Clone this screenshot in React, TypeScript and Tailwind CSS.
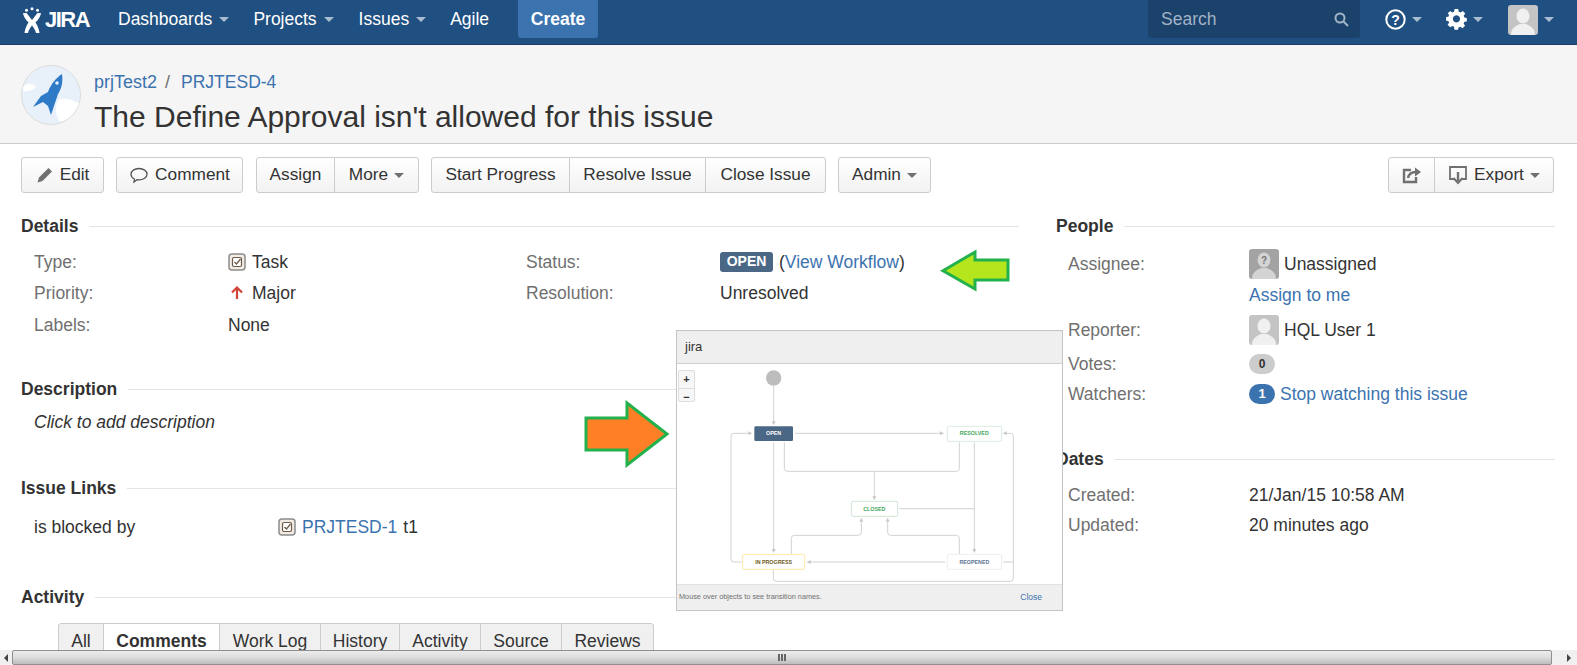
import React from 'react';

const Caret = ({ className = 'border-t-[#a9bcd0]' }: { className?: string }) => (
  <span className={`inline-block w-0 h-0 border-x-[5px] border-x-transparent border-t-[5px] ${className}`} />
);

const NavItem = ({ label, caret = true, className }: { label: string; caret?: boolean; className: string }) => (
  <a className={`flex items-center gap-[7px] mb-[5px] text-white text-[17.5px] ${className}`}>
    {label}
    {caret && <Caret />}
  </a>
);

const JiraLogo = () => (
  <div className="flex items-center w-[67px] h-[28px] mb-[5px] text-white">
    <svg width="18" height="26" viewBox="0 0 18 26" fill="currentColor" className="shrink-0">
      <circle cx="3.500" cy="3.200" r="1.500" />
      <circle cx="9" cy="1.800" r="1.500" />
      <circle cx="14.500" cy="3.200" r="1.500" />
      <path d="M0 6h3.500l5.500 7 5.500-7H18c-.5 4-3 7-5.500 9.500 2 3 3.500 6.500 4 10.500h-3.500c-.6-3-2.400-5.500-4-7.500-1.600 2-3.400 4.500-4 7.500H1.500c.5-4 2-7.500 4-10.500C3 13 .5 10 0 6z" />
    </svg>
    <span className="font-bold text-[22px] tracking-[-1.5px] ml-[4px] leading-none">JIRA</span>
  </div>
);

const Avatar = ({ size = 30, unknown = false }: { size?: number; unknown?: boolean }) => (
  <svg width={size} height={size} viewBox="0 0 30 30" className="shrink-0 rounded-[3px]">
    <rect width="30" height="30" fill={unknown ? '#a3a3a3' : '#c4c4c4'} />
    <ellipse cx="15" cy="11" rx="6.500" ry="7.500" fill={unknown ? '#d4d4d4' : '#f0f0f0'} />
    <path d="M3 30c0-7 5-9 9-11h6c4 2 9 4 9 11z" fill={unknown ? '#d4d4d4' : '#f0f0f0'} />
    {unknown && (
      <text x="15" y="15" textAnchor="middle" fontSize="10" fontWeight="700" fill="#777">?</text>
    )}
  </svg>
);

const ProjectAvatar = () => (
  <svg width="60" height="60" viewBox="0 0 60 60" className="shrink-0">
    <circle cx="30" cy="30" r="29.500" fill="#e8f0fa" stroke="#dcdcdc" />
    <path d="M38 34c5-1 12 0 20 4-3 9-10 17-19 19-4-5-6-16-1-23z" fill="#fff" />
    <path d="M2 22c4-4 10-4 13 0-2 3-8 5-13 4z" fill="#fff" />
    <path d="M41 9C42 16 41 23 37 29L34 38 30 50 27 41 22 37 12 42 20 31 27 27C30 19 35 13 41 9z" fill="#2f7ac6" />
    <circle cx="36" cy="18" r="1.800" fill="#e8f0fa" />
  </svg>
);

const TaskIcon = () => (
  <svg width="18" height="18" viewBox="0 0 18 18" className="shrink-0">
    <rect x="1" y="1" width="16" height="16" rx="3" fill="#f3ece4" stroke="#8c8c8c" strokeWidth="1.500" />
    <rect x="4.500" y="4.500" width="9" height="9" rx="1.500" fill="#fff" stroke="#6e5a48" strokeWidth="1.200" />
    <path d="M6.500 9l2 2 4-5" fill="none" stroke="#6e5a48" strokeWidth="1.300" />
  </svg>
);

const Btn = ({ children, className = '' }: { children: React.ReactNode; className?: string }) => (
  <button className={`h-[36px] flex items-center justify-center gap-[6px] border border-[#cccccc] bg-linear-to-b from-white to-[#f2f2f2] text-[#333] text-[17.25px] rounded-[3px] ${className}`}>
    {children}
  </button>
);

const GroupBtn = ({ children, className = '' }: { children: React.ReactNode; className?: string }) => (
  <button className={`h-full flex items-center justify-center gap-[6px] border-l border-[#cccccc] first:border-l-0 text-[#333] text-[17.25px] ${className}`}>
    {children}
  </button>
);

const BtnGroup = ({ children, className = '' }: { children: React.ReactNode; className?: string }) => (
  <div className={`h-[36px] flex border border-[#cccccc] bg-linear-to-b from-white to-[#f2f2f2] rounded-[3px] ${className}`}>
    {children}
  </div>
);

const Heading = ({ title, className = '' }: { title: string; className?: string }) => (
  <div className={`flex items-center gap-[11px] h-[24px] ${className}`}>
    <h4 className="font-bold text-[17.5px] text-[#333]">{title}</h4>
    <div className="flex-1 h-px bg-[#e4e4e4]" />
  </div>
);

const Field = ({ label, labelW, children, className = 'h-[32px]' }: { label: string; labelW: string; children?: React.ReactNode; className?: string }) => (
  <div className={`flex items-center text-[17.5px] ${className}`}>
    <span className={`text-[#707070] shrink-0 ${labelW}`}>{label}</span>
    <div className="flex items-center text-[#333]">{children}</div>
  </div>
);

const Link = ({ children, className = '' }: { children: React.ReactNode; className?: string }) => (
  <a className={`text-[#3b73af] ${className}`}>{children}</a>
);

const WorkflowDiagram = () => {
  const arrows = [
    'M311 182V292',
    'M375 325H818',
    'M343 352V430Q343 439 352 439H860Q868 439 868 430V352',
    'M613 439V516',
    'M311 352V675',
    'M913 352V675',
    'M688 551H913',
    'M364 688V640Q364 631 373 631H565Q574 631 574 622V590',
    'M868 688V640Q868 631 859 631H662Q653 631 653 622V590',
    'M825 711H420',
    'M217 711H192Q183 711 183 702V334Q183 325 192 325H235',
    'M310 735V760Q310 769 319 769H1021Q1030 769 1030 760V334Q1030 325 1021 325H1010',
    'M1000 711H1030',
  ];
  const heads = [
    '311,301 305,289 317,289',
    '822,325 810,319 810,331',
    '613,526 607,514 619,514',
    '311,684 305,672 317,672',
    '913,684 907,672 919,672',
    '574,578 568,590 580,590',
    '653,578 647,590 659,590',
    '410,711 422,705 422,717',
    '247,325 235,319 235,331',
    '998,325 1010,319 1010,331',
  ];
  return (
    <svg viewBox="21 117 1155 660" className="block w-[385px] h-[220px]">
      <circle cx="311" cy="159" r="23" fill="#bdbdbd" />
      {arrows.map((d) => (
        <path key={d} d={d} fill="none" stroke="#d2d2d2" strokeWidth="3" />
      ))}
      {heads.map((p) => (
        <polygon key={p} points={p} fill="#c8c8c8" />
      ))}
      <rect x="253" y="304" width="116" height="44" rx="4" fill="#4a6785" />
      <text x="311" y="331" textAnchor="middle" fontSize="16" fontWeight="700" fill="#fff">OPEN</text>
      <rect x="832" y="304" width="163" height="45" rx="5" fill="#fff" stroke="#dcebe0" strokeWidth="3" />
      <text x="913" y="331" textAnchor="middle" fontSize="16" fontWeight="700" fill="#3fa75a">RESOLVED</text>
      <rect x="544" y="529" width="139" height="45" rx="5" fill="#fff" stroke="#cfe6d5" strokeWidth="3" />
      <text x="613" y="557" textAnchor="middle" fontSize="16" fontWeight="700" fill="#3fa75a">CLOSED</text>
      <rect x="218" y="688" width="186" height="45" rx="5" fill="#fff" stroke="#ffe9a8" strokeWidth="3" />
      <text x="311" y="716" textAnchor="middle" fontSize="16" fontWeight="700" fill="#6b5a22">IN PROGRESS</text>
      <rect x="832" y="688" width="163" height="45" rx="5" fill="#fff" stroke="#ebeff3" strokeWidth="3" />
      <text x="913" y="716" textAnchor="middle" fontSize="16" fontWeight="700" fill="#5a7394">REOPENED</text>
    </svg>
  );
};

export default function App() {
  return (
    <div className="relative h-[665px] w-[1577px] overflow-hidden flex flex-col bg-white font-['Liberation_Sans',Arial,sans-serif]">
      {/* top nav */}
      <header className="h-[45px] shrink-0 bg-[#205081] border-b border-[#1b3f66] flex items-center">
        <div className="ml-[23px] mr-[28px]"><JiraLogo /></div>
        <NavItem label="Dashboards" className="mr-[24px]" />
        <NavItem label="Projects" className="mr-[25px]" />
        <NavItem label="Issues" className="mr-[24px]" />
        <NavItem label="Agile" caret={false} className="mr-[29px]" />
        <button className="self-start h-[38px] w-[80px] bg-[#3b73af] rounded-b-[3px] text-white font-bold text-[17.5px]">Create</button>
        <div className="ml-auto self-start h-[38px] w-[212px] bg-[#1b426b] rounded-b-[3px] flex items-center justify-between pl-[13px] pr-[11px]">
          <span className="text-[#a2b3c6] text-[17.5px]">Search</span>
          <svg width="15" height="15" viewBox="0 0 15 15" fill="none" stroke="#a2b3c6" strokeWidth="2">
            <circle cx="6" cy="6" r="4.500" />
            <path d="M9.500 9.500L14 14" />
          </svg>
        </div>
        <svg width="21" height="21" viewBox="0 0 21 21" className="ml-[25px] mb-[6px]">
          <circle cx="10.500" cy="10.500" r="9.200" fill="none" stroke="#fff" strokeWidth="2" />
          <text x="10.500" y="15.500" textAnchor="middle" fontSize="14" fontWeight="700" fill="#fff">?</text>
        </svg>
        <span className="ml-[6px] mb-[5px] flex"><Caret /></span>
        <svg width="21" height="21" viewBox="0 0 21 21" className="ml-[24px] mb-[6px]" fill="#fff">
          <path fillRule="evenodd" d="M8.500 0h4l.5 3 2 .9 2.500-1.800 2.800 2.800L18.500 7.400l.8 2 2.700.5v4l-2.700.4-.8 2 1.600 2.300-2.800 2.800-2.500-1.600-2 .8-.5 2.400h-4L7.800 19.600l-2-.8-2.300 1.600L.7 17.600l1.600-2.300-.8-2L-1 13V9l2.500-.5.800-2L.7 4.900l2.800-2.800L5.800 3.900l2-.9z M10.500 7a4 4 0 1 0 .01 0z" transform="translate(1 0) scale(.9)" />
        </svg>
        <span className="ml-[6px] mb-[5px] flex"><Caret /></span>
        <div className="ml-[25px] mb-[5px]"><Avatar /></div>
        <span className="ml-[6px] mr-[23px] mb-[5px] flex"><Caret /></span>
      </header>

      {/* issue header */}
      <section className="h-[99px] shrink-0 bg-[#f5f5f5] border-b border-[#cccccc] flex items-center pl-[21px] pt-[1px]">
        <ProjectAvatar />
        <div className="ml-[13px] mt-[16px]">
          <div className="flex items-center text-[18px] h-[24px] mt-[1px]">
            <Link>prjTest2</Link>
            <span className="text-[#707070] ml-[8px] mr-[11px]">/</span>
            <Link className="text-[17.5px]">PRJTESD-4</Link>
          </div>
          <h1 className="text-[30px] leading-[38px] text-[#333] mt-[3px]">The Define Approval isn't allowed for this issue</h1>
        </div>
      </section>

      {/* actions */}
      <div className="shrink-0 flex items-center pl-[21px] pr-[23px] mt-[13px]">
        <Btn className="w-[83px]">
          <svg width="18" height="18" viewBox="0 0 18 18" fill="#707070">
            <path d="M12.500 2l3.500 3.500L6.500 15 1.500 16.500 3 11.500z" />
          </svg>
          Edit
        </Btn>
        <Btn className="w-[127px] ml-[12px]">
          <svg width="20" height="20" viewBox="0 0 20 20" fill="none" stroke="#555" strokeWidth="1.300">
            <path d="M10 3.500c4.400 0 8 2.500 8 5.700s-3.600 5.700-8 5.700c-.7 0-1.300-.1-2-.2L5 17l.4-3C3.400 13 2 11.200 2 9.200c0-3.200 3.600-5.700 8-5.700z" />
          </svg>
          Comment
        </Btn>
        <BtnGroup className="ml-[13px]">
          <GroupBtn className="w-[77px]">Assign</GroupBtn>
          <GroupBtn className="w-[84px]">More <Caret className="border-t-[#707070]" /></GroupBtn>
        </BtnGroup>
        <BtnGroup className="ml-[12px]">
          <GroupBtn className="w-[137px]">Start Progress</GroupBtn>
          <GroupBtn className="w-[136px]">Resolve Issue</GroupBtn>
          <GroupBtn className="w-[120px]">Close Issue</GroupBtn>
        </BtnGroup>
        <Btn className="w-[93px] ml-[12px]">Admin <Caret className="border-t-[#707070]" /></Btn>
        <BtnGroup className="ml-auto">
          <GroupBtn className="w-[45px]">
            <svg width="20" height="18" viewBox="0 0 20 18" fill="none" stroke="#707070" strokeWidth="2.400">
              <path d="M9 4H2v12h12v-5" />
              <path d="M6 12c1-5 4-6 8-6" />
              <path d="M13 1.500l6 4.500-6 4.500z" fill="#707070" stroke="none" />
            </svg>
          </GroupBtn>
          <GroupBtn className="w-[119px]">
            <svg width="20" height="20" viewBox="0 0 20 20" fill="none" stroke="#707070" strokeWidth="1.800">
              <path d="M6 14H2V2h16v12h-4" />
              <path d="M10 7v9" strokeWidth="2.400" />
              <path d="M5.500 13l4.500 5 4.500-5" strokeWidth="2" />
            </svg>
            Export <Caret className="border-t-[#707070]" />
          </GroupBtn>
        </BtnGroup>
      </div>

      {/* body */}
      <main className="flex-1 min-h-0 overflow-hidden flex pl-[21px] pr-[22px] pt-[21px]">
        <div className="w-[998px] shrink-0">
          <Heading title="Details" className="mb-[8px]" />
          <div className="flex pl-[13px]">
            <div className="w-[492px]">
              <Field label="Type:" labelW="w-[194px]" className="h-[31.5px]">
                <TaskIcon /><span className="ml-[6px]">Task</span>
              </Field>
              <Field label="Priority:" labelW="w-[194px]" className="h-[31.5px]">
                <svg width="18" height="18" viewBox="0 0 18 18" fill="none" stroke="#d04437" strokeWidth="2.200">
                  <path d="M9 15V4M4 8.500L9 3.500l5 5" />
                </svg>
                <span className="ml-[6px]">Major</span>
              </Field>
              <Field label="Labels:" labelW="w-[194px]" className="h-[31.5px]">None</Field>
            </div>
            <div>
              <Field label="Status:" labelW="w-[194px]" className="h-[31.5px]">
                <span className="h-[20px] w-[53px] flex items-center justify-center rounded-[3px] bg-[#4a6785] text-white font-bold text-[14px]">OPEN</span>
                <span className="ml-[6px] text-[#333]">(<Link>View Workflow</Link>)</span>
              </Field>
              <Field label="Resolution:" labelW="w-[194px]" className="h-[31.5px]">Unresolved</Field>
            </div>
          </div>

          <Heading title="Description" className="mt-[36.5px]" />
          <div className="h-[32px] mt-[5px] pl-[13px] flex items-center italic text-[17.5px] text-[#333]">Click to add description</div>

          <Heading title="Issue Links" className="mt-[38px]" />
          <div className="flex items-center h-[32px] mt-[11px] pl-[13px] text-[17.5px] text-[#333]">
            <span className="w-[244px]">is blocked by</span>
            <TaskIcon />
            <Link className="ml-[6px]">PRJTESD-1</Link>
            <span className="ml-[6px]">t1</span>
          </div>

          <Heading title="Activity" className="mt-[42px]" />
          <div className="mt-[14px] ml-[37px] flex w-fit h-[40px] border border-[#cccccc] rounded-t-[3px] bg-[#f0f0f0] text-[17.5px] text-[#333]">
            <span className="w-[44px] pt-[4px] text-center">All</span>
            <span className="w-[117px] pt-[4px] text-center font-bold bg-white border-x border-[#cccccc]">Comments</span>
            <span className="w-[100px] pt-[4px] text-center">Work Log</span>
            <span className="w-[79px] pt-[4px] text-center border-l border-[#cccccc]">History</span>
            <span className="w-[81px] pt-[4px] text-center border-l border-[#cccccc]">Activity</span>
            <span className="w-[81px] pt-[4px] text-center border-l border-[#cccccc]">Source</span>
            <span className="w-[92px] pt-[4px] text-center border-l border-[#cccccc]">Reviews</span>
          </div>
        </div>

        <div className="ml-[37px] flex-1">
          <Heading title="People" />
          <div className="pl-[12px] mt-[10px]">
            <Field label="Assignee:" labelW="w-[181px]">
              <Avatar unknown /><span className="ml-[5px]">Unassigned</span>
            </Field>
            <div className="h-[31px] ml-[181px] flex items-center text-[17.5px]"><Link>Assign to me</Link></div>
            <div className="mt-[3px]">
              <Field label="Reporter:" labelW="w-[181px]">
                <Avatar /><span className="ml-[5px]">HQL User 1</span>
              </Field>
            </div>
            <Field label="Votes:" labelW="w-[181px]" className="h-[32px] mt-[2px]">
              <span className="w-[26px] h-[20px] rounded-full bg-[#cccccc] text-[#333] font-bold text-[12px] flex items-center justify-center">0</span>
            </Field>
            <Field label="Watchers:" labelW="w-[181px]" className="h-[32px] -mt-[2px]">
              <span className="w-[26px] h-[20px] rounded-full bg-[#3b73af] text-white font-bold text-[13px] flex items-center justify-center">1</span>
              <Link className="ml-[5px]">Stop watching this issue</Link>
            </Field>
          </div>
          <Heading title="Dates" className="mt-[37px]" />
          <div className="pl-[12px] mt-[8px]">
            <Field label="Created:" labelW="w-[181px]">21/Jan/15 10:58 AM</Field>
            <Field label="Updated:" labelW="w-[181px]" className="h-[32px] -mt-[2px]">20 minutes ago</Field>
          </div>
        </div>
      </main>

      {/* browser scrollbar */}
      <div className="h-[15px] shrink-0 flex bg-[#f0f0f0]">
        <div className="w-[12px] flex items-center justify-center shrink-0">
          <span className="w-0 h-0 border-y-[4px] border-y-transparent border-r-[4px] border-r-[#444]" />
        </div>
        <div className="flex-1 flex items-center justify-center gap-[1px] bg-linear-to-b from-[#ececec] via-[#dcdcdc] to-[#bdbdbd] border border-[#8f8f8f] rounded-[2px]">
          <span className="w-[2px] h-[7px] bg-[#666]" />
          <span className="w-[2px] h-[7px] bg-[#666]" />
          <span className="w-[2px] h-[7px] bg-[#666]" />
        </div>
        <div className="w-[25px] flex items-center justify-end pr-[6px] shrink-0">
          <span className="w-0 h-0 border-y-[4px] border-y-transparent border-l-[4px] border-l-[#444]" />
        </div>
      </div>

      {/* workflow popup */}
      <div className="absolute left-[676px] top-[330px] w-[387px] h-[281px] flex flex-col bg-white border border-[#c4c4c4]">
        <div className="h-[33px] shrink-0 bg-[#efefef] border-b border-[#cfcfcf] flex items-center pl-[8px] text-[13px] text-[#333]">jira</div>
        <div className="relative flex-1 min-h-0 overflow-hidden">
          <WorkflowDiagram />
          <div className="absolute left-[1px] top-[6px] w-[17px] h-[32px] flex flex-col border border-[#ddd] rounded-[2px] bg-[#f7f7f7] text-[11px] font-bold text-[#333]">
            <span className="flex-1 flex items-center justify-center border-b border-[#ddd]">+</span>
            <span className="flex-1 flex items-center justify-center">−</span>
          </div>
        </div>
        <div className="h-[26px] shrink-0 bg-[#efefef] border-t border-[#e2e2e2] flex items-center justify-between pl-[2px] pr-[20px]">
          <span className="text-[7.3px] text-[#707070]">Mouse over objects to see transition names.</span>
          <span className="text-[8.5px] text-[#3b73af]">Close</span>
        </div>
      </div>

      {/* pasted annotation arrows */}
      <svg className="absolute left-[940px] top-[249px]" width="72" height="44" viewBox="940 249 72 44">
        <polygon points="943,270.700 975,252 975,260 1008,260 1008,280 975,280 975,289" fill="#b5e61d" stroke="#22b14c" strokeWidth="3" />
      </svg>
      <svg className="absolute left-[584px] top-[400px]" width="86" height="68" viewBox="584 400 86 68">
        <polygon points="586,418 627,418 627,403 667,434 627,465 627,450 586,450" fill="#ff7f27" stroke="#22b14c" strokeWidth="3" />
      </svg>
    </div>
  );
}
